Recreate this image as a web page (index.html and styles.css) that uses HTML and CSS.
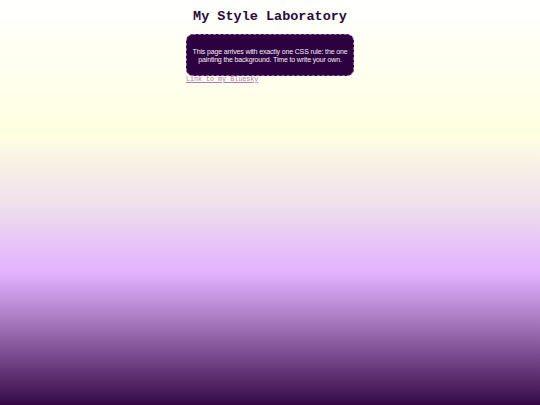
FILE: index.html
```html
<!DOCTYPE html>
<html>
<head>
<meta charset="utf-8">
<link rel="stylesheet" href="styles.css">
</head>
<body>
<main class="lab">
  <h1 class="title">My Style Laboratory</h1>
  <p class="notice">This page arrives with exactly one CSS rule: the one painting the background. Time to write your own.</p>
  <a class="link" href="#">Link to my Bluesky</a>
</main>
</body>
</html>
```
FILE: styles.css
```css
html, body {
  margin: 0;
  height: 100%;
}
body {
  background: linear-gradient(to bottom, #ffffff 0%, #ffffe0 33%, #f0e0ec 50%, #e0b0ff 68%, #9a6ab0 82%, #350845 100%);
  background-attachment: fixed;
}
.lab {
  width: 168px;
  margin: 0 auto;
  padding-top: 9px;
  display: flex;
  flex-direction: column;
  align-items: stretch;
}
.title {
  margin: 0;
  font-family: "Liberation Mono", monospace;
  font-weight: bold;
  font-size: 13.5px;
  line-height: 16px;
  color: #2a0a3a;
  text-align: center;
  white-space: nowrap;
}
.notice {
  margin: 9px 0 0;
  padding: 13px 2px 10px;
  background: #2d0040;
  border: 1px dashed #9a5aa8;
  border-radius: 7px;
  color: #f6ecf9;
  font-family: "Liberation Sans", Arial, sans-serif;
  font-size: 7px;
  letter-spacing: -0.15px;
  line-height: 8.4px;
  text-align: center;
}
.link {
  margin-top: -1px;
  font-family: "Liberation Mono", monospace;
  font-size: 6.7px;
  line-height: 8px;
  color: #b07ab8;
  align-self: flex-start;
}
```
